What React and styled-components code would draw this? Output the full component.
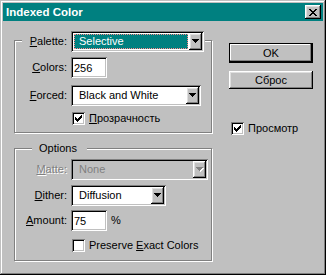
import React from "react";
import styled, { createGlobalStyle, css } from "styled-components";

const GlobalStyle = createGlobalStyle`
  html, body { margin: 0; padding: 0; background: #c0c0c0; }
  body {
    font-family: "Liberation Sans", Arial, sans-serif;
    font-size: 11px;
    line-height: 13px;
    color: #000;
  }
  *, *::before, *::after { box-sizing: border-box; }
`;

const raised =
  "inset -1px -1px #000, inset 1px 1px #fff, inset -2px -2px #808080, inset 2px 2px #dfdfdf";
const sunken =
  "inset 1px 1px #808080, inset -1px -1px #fff, inset 2px 2px #000, inset -2px -2px #c0c0c0";

const Window = styled.div`
  width: 326px;
  height: 275px;
  padding: 3px;
  background: #c0c0c0;
  display: flex;
  flex-direction: column;
  box-shadow: inset -1px -1px #000, inset 1px 1px #c0c0c0, inset -2px -2px #808080,
    inset 2px 2px #fff;
`;

const TitleBar = styled.div`
  flex: none;
  height: 18px;
  background: #008080;
  color: #fff;
  display: flex;
  align-items: center;
  justify-content: space-between;
  padding: 0 2px 0 3px;
`;

const Title = styled.span`
  font-weight: bold;
  font-size: 11.5px;
`;

const CloseButton = styled.div`
  width: 16px;
  height: 14px;
  background: #c0c0c0;
  display: flex;
  align-items: center;
  justify-content: center;
  box-shadow: ${raised};
`;

const Body = styled.div`
  flex: 1;
  display: flex;
  align-items: flex-start;
  padding: 19px 0 0 11px;
`;

const LeftCol = styled.div`
  width: 198px;
  display: flex;
  flex-direction: column;
  gap: 15px;
`;

const Group = styled.div`
  border: 1px solid #808080;
  box-shadow: inset 1px 1px #fff, 1px 1px #fff;
  padding-bottom: ${(p) => p.$pb}px;
  display: flex;
  flex-direction: column;
  align-items: flex-start;
`;

const Legend = styled.div`
  display: flex;
  align-items: center;
  gap: 4px;
  background: #c0c0c0;
  margin: ${(p) => p.$mt}px 0 0 ${(p) => p.$ml}px;
  padding: 0 ${(p) => p.$pr || 0}px 0 ${(p) => p.$pl || 0}px;
`;

const Row = styled.div`
  display: flex;
  align-items: center;
  gap: 4px;
  margin: ${(p) => p.$mt}px 0 0 ${(p) => (p.$ml == null ? 7 : p.$ml)}px;
`;

const Label = styled.span`
  width: 45px;
  text-align: right;
  white-space: nowrap;
  color: ${(p) => (p.$disabled ? "#808080" : "#000")};
  text-shadow: ${(p) => (p.$disabled ? "1px 1px #fff" : "none")};
`;

const Plain = styled.span`
  white-space: nowrap;
  padding-left: ${(p) => p.$pl || 0}px;
`;

const Field = styled.div`
  width: ${(p) => p.$w}px;
  height: 21px;
  padding: 2px;
  display: flex;
  background: ${(p) => (p.$disabled ? "#c0c0c0" : "#fff")};
  box-shadow: ${sunken};
`;

const SelectValue = styled.div`
  flex: 1;
  margin: 1px;
  padding-left: 5px;
  display: flex;
  align-items: center;
  white-space: nowrap;
  color: ${(p) => (p.$disabled ? "#808080" : "#000")};
  ${(p) =>
    p.$focused &&
    css`
      background: #008080;
      color: #fff;
      outline: 1px dotted #ff8a8a;
      outline-offset: -1px;
    `}
`;

const DropButton = styled.div`
  width: 13px;
  height: 17px;
  flex: none;
  background: #c0c0c0;
  display: flex;
  align-items: center;
  justify-content: center;
  box-shadow: ${raised};
`;

const TextBox = styled.input`
  width: ${(p) => p.$w}px;
  height: 21px;
  border: 0;
  outline: none;
  margin: 0;
  padding: 1px 0 0 3px;
  background: #fff;
  font: inherit;
  color: #000;
  box-shadow: ${sunken};
`;

const CheckRow = styled.div`
  display: flex;
  align-items: center;
  gap: 4px;
  margin: ${(p) => p.$mt}px 0 0 ${(p) => p.$ml}px;
`;

const CheckBox = styled.span`
  width: 13px;
  height: 13px;
  flex: none;
  background: #fff;
  display: flex;
  align-items: center;
  justify-content: center;
  box-shadow: ${sunken};
`;

const RightCol = styled.div`
  width: 84px;
  margin-left: 17px;
  padding-top: 3px;
  display: flex;
  flex-direction: column;
  align-items: stretch;
`;

const Button = styled.div`
  height: ${(p) => p.$h}px;
  margin-top: ${(p) => p.$mt || 0}px;
  background: #c0c0c0;
  display: flex;
  align-items: center;
  justify-content: center;
  box-shadow: ${(p) =>
    p.$default
      ? "inset 0 0 0 1px #000, inset -2px -2px #000, inset -3px -3px #808080, inset 2px 2px #fff"
      : raised};
`;

const Check = () => (
  <svg width="7" height="7" viewBox="0 0 7 7" shapeRendering="crispEdges">
    <path
      fill="#000"
      d="M0 2h1v3h-1z M1 3h1v3h-1z M2 4h1v3h-1z M3 3h1v3h-1z M4 2h1v3h-1z M5 1h1v3h-1z M6 0h1v3h-1z"
    />
  </svg>
);

const Arrow = ({ disabled }) => (
  <svg width="8" height="5" viewBox="0 0 8 5" shapeRendering="crispEdges">
    {disabled && (
      <path fill="#fff" d="M1 1h7v1h-7z M2 2h5v1h-5z M3 3h3v1h-3z M4 4h1v1h-1z" />
    )}
    <path
      fill={disabled ? "#808080" : "#000"}
      d="M0 0h7v1h-7z M1 1h5v1h-5z M2 2h3v1h-3z M3 3h1v1h-1z"
    />
  </svg>
);

const CloseGlyph = () => (
  <svg width="8" height="7" viewBox="0 0 8 7" shapeRendering="crispEdges">
    <path
      fill="#000"
      d="M0 0h2v1h-2z M6 0h2v1h-2z M1 1h2v1h-2z M5 1h2v1h-2z M2 2h4v1h-4z M3 3h2v1h-2z M2 4h4v1h-4z M1 5h2v1h-2z M5 5h2v1h-2z M0 6h2v1h-2z M6 6h2v1h-2z"
    />
  </svg>
);

const Select = ({ width, value, focused, disabled }) => (
  <Field $w={width} $disabled={disabled}>
    <SelectValue $focused={focused} $disabled={disabled}>
      {value}
    </SelectValue>
    <DropButton>
      <Arrow disabled={disabled} />
    </DropButton>
  </Field>
);

const CheckItem = ({ checked, children, mt, ml }) => (
  <CheckRow $mt={mt} $ml={ml}>
    <CheckBox>{checked && <Check />}</CheckBox>
    <Plain>{children}</Plain>
  </CheckRow>
);

export default function App() {
  return (
    <>
      <GlobalStyle />
      <Window>
        <TitleBar>
          <Title>Indexed Color</Title>
          <CloseButton>
            <CloseGlyph />
          </CloseButton>
        </TitleBar>
        <Body>
          <LeftCol>
            <Group $pb={7}>
              <Legend $mt={-10} $ml={7} $pr={1}>
                <Label>
                  <u>P</u>alette:
                </Label>
                <Select width={133} value="Selective" focused />
              </Legend>
              <Row $mt={5}>
                <Label>
                  <u>C</u>olors:
                </Label>
                <TextBox $w={36} readOnly value="256" />
              </Row>
              <Row $mt={7}>
                <Label>
                  <u>F</u>orced:
                </Label>
                <Select width={130} value="Black and White" />
              </Row>
              <CheckItem checked mt={6} ml={57}>
                <u>П</u>розрачность
              </CheckItem>
            </Group>
            <Group $pb={8}>
              <Legend $mt={-7} $ml={17} $pl={7} $pr={10}>
                <Plain>Options</Plain>
              </Legend>
              <Row $mt={4}>
                <Label $disabled>
                  <u>M</u>atte:
                </Label>
                <Select width={137} value="None" disabled />
              </Row>
              <Row $mt={5}>
                <Label>
                  <u>D</u>ither:
                </Label>
                <Select width={95} value="Diffusion" />
              </Row>
              <Row $mt={4}>
                <Label>
                  <u>A</u>mount:
                </Label>
                <TextBox $w={36} readOnly value="75" />
                <Plain>%</Plain>
              </Row>
              <CheckItem mt={8} ml={57}>
                Preserve <u>E</u>xact Colors
              </CheckItem>
            </Group>
          </LeftCol>
          <RightCol>
            <Button $default $h={20}>
              OK
            </Button>
            <Button $h={18} $mt={8}>
              Сброс
            </Button>
            <CheckItem checked mt={33} ml={2}>
              Просмотр
            </CheckItem>
          </RightCol>
        </Body>
      </Window>
    </>
  );
}
